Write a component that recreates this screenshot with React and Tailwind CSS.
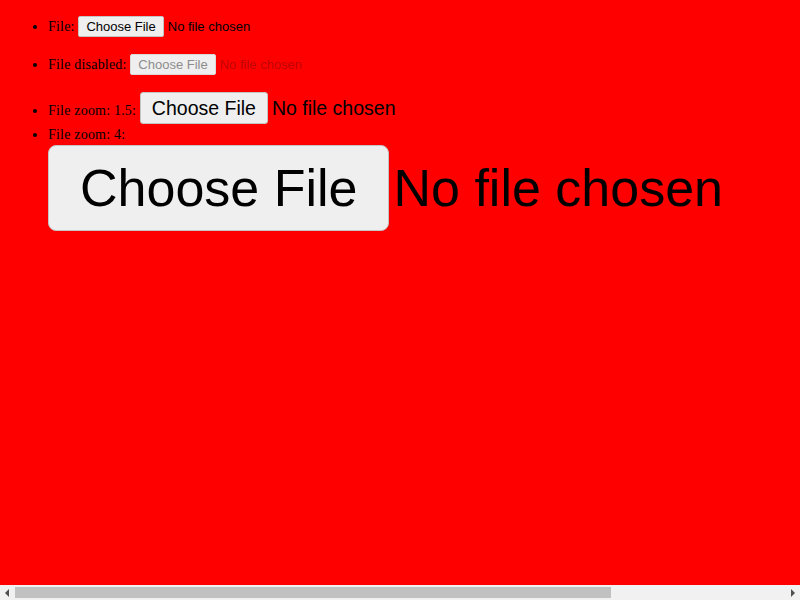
import React from "react";

const base =
  "font-['Liberation_Sans',Arial,sans-serif] text-[13px] leading-[15px] tracking-normal align-baseline file:py-0 file:rounded-[2px] file:bg-[#efefef] file:border-solid";

const fileInput =
  base + " text-black file:h-[21px] file:mr-[4px] file:px-[7px] file:border file:border-[#c4c4c4] file:text-black";

const disabledInput =
  base + " text-[rgba(16,16,16,0.3)] file:h-[21px] file:mr-[4px] file:px-[7px] file:border file:border-[#dadada] file:text-[#8d8d8d]";

const zoom15 =
  base + " [zoom:1.5] text-black file:h-[21.33px] file:mr-[2.67px] file:px-[7.33px] file:border-[0.67px] file:border-[#c4c4c4] file:text-black";

const zoom4 =
  base + " [zoom:4] text-black file:h-[21.5px] file:mr-[1px] file:px-[7.75px] file:border-[0.25px] file:rounded-[0.75px] file:border-[#c4c4c4] file:text-black";

function Scrollbar() {
  return (
    <div className="h-[15px] shrink-0 bg-[#f1f1f1] flex items-center">
      <div className="w-[15px] h-[15px] flex items-center justify-center">
        <svg width="5" height="8" viewBox="0 0 5 8">
          <path d="M4 0 L0 4 L4 8 Z" fill="#505050" />
        </svg>
      </div>
      <div className="flex-1 h-[15px] py-[2px]">
        <div className="w-[596px] h-[11px] bg-[#c1c1c1]" />
      </div>
      <div className="w-[15px] h-[15px] flex items-center justify-center">
        <svg width="5" height="8" viewBox="0 0 5 8">
          <path d="M1 0 L5 4 L1 8 Z" fill="#505050" />
        </svg>
      </div>
    </div>
  );
}

export default function App() {
  return (
    <div className="h-screen flex flex-col bg-[#ff0000] text-[14px] tracking-[0.2px] text-black font-['Liberation_Serif','Times_New_Roman',serif]">
      <div className="flex-1 overflow-hidden px-[8px] pt-[13px] flex flex-col gap-[13px]">
        <ul className="list-disc pl-[40px]">
          <li className="pt-[3px] pb-[1px]">
            File: <input type="file" className={fileInput} />
          </li>
        </ul>
        <ul className="list-disc pl-[40px]">
          <li className="pt-[3px] pb-[1px]">
            File disabled: <input type="file" disabled className={disabledInput} />
          </li>
        </ul>
        <ul className="list-disc pl-[40px]">
          <li className="pt-[3px]">
            File zoom: 1.5: <input type="file" className={zoom15} />
          </li>
          <li>
            File zoom: 4: <input type="file" className={zoom4} />
          </li>
        </ul>
      </div>
      <Scrollbar />
    </div>
  );
}
